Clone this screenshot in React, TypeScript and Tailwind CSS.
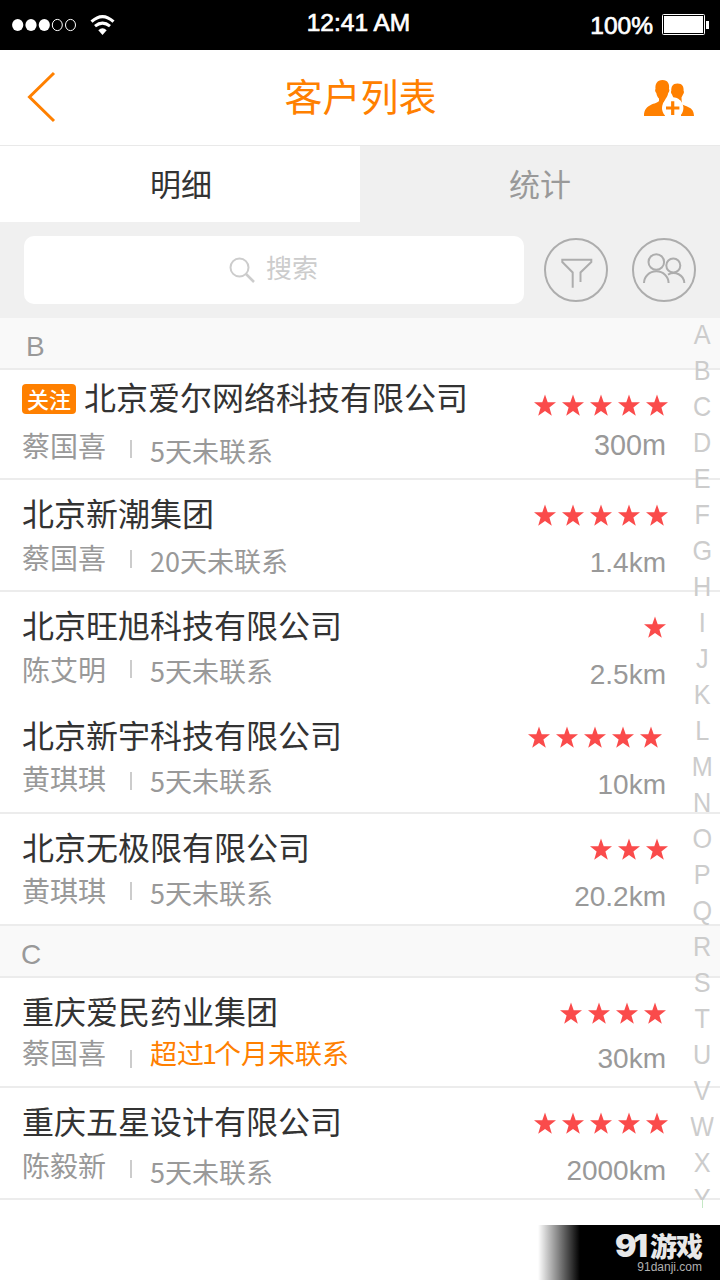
type Customer = {
  name: string;
  person: string;
  note: string;
  noteDigits: string;
  notePrefix?: string;
  distance: string;
  stars: number;
  followed?: boolean;
  urgent?: boolean;
  row: string;
  namePad: string;
  personTop: string;
  barTop: string;
  noteTop: string;
  starsRight: string;
  distanceTop: string;
};

const LINE = 'border-b-2 border-[#ececec]';

const groupB: Customer[] = [
  { name: '北京爱尔网络科技有限公司', person: '蔡国喜', noteDigits: '5', note: '天未联系', distance: '300m', stars: 5, followed: true, row: `h-[110px] ${LINE}`, namePad: 'pt-1.5', personTop: '-mt-px', barTop: 'mt-[10px]', noteTop: 'mt-[5px]', starsRight: 'mr-0', distanceTop: 'mt-[13px] text-[28.8px]' },
  { name: '北京新潮集团', person: '蔡国喜', noteDigits: '20', note: '天未联系', distance: '1.4km', stars: 5, row: `h-[112px] ${LINE}`, namePad: 'pt-3', personTop: 'mt-px', barTop: 'mt-[10px]', noteTop: 'mt-[5px]', starsRight: 'mr-0', distanceTop: 'mt-[21px] text-[28px]' },
  { name: '北京旺旭科技有限公司', person: '陈艾明', noteDigits: '5', note: '天未联系', distance: '2.5km', stars: 1, row: 'h-[110px]', namePad: 'pt-3', personTop: 'mt-px', barTop: 'mt-2', noteTop: 'mt-[3px]', starsRight: 'mr-0.5', distanceTop: 'mt-[21px] text-[28px]' },
  { name: '北京新宇科技有限公司', person: '黄琪琪', noteDigits: '5', note: '天未联系', distance: '10km', stars: 5, row: `h-[112px] ${LINE}`, namePad: 'pt-3', personTop: 'mt-0', barTop: 'mt-[10px]', noteTop: 'mt-[3px]', starsRight: 'mr-1.5', distanceTop: 'mt-[21px] text-[28px]' },
  { name: '北京无极限有限公司', person: '黄琪琪', noteDigits: '5', note: '天未联系', distance: '20.2km', stars: 3, row: `h-[112px] ${LINE}`, namePad: 'pt-3', personTop: 'mt-0', barTop: 'mt-2', noteTop: 'mt-[3px]', starsRight: 'mr-0', distanceTop: 'mt-[21px] text-[28px]' },
];

const groupC: Customer[] = [
  { name: '重庆爱民药业集团', person: '蔡国喜', notePrefix: '超过', noteDigits: '1', note: '个月未联系', distance: '30km', stars: 4, urgent: true, row: `h-[110px] ${LINE}`, namePad: 'pt-3', personTop: '-mt-0.5', barTop: 'mt-3', noteTop: '-mt-px', starsRight: 'mr-0.5', distanceTop: 'mt-[19px] text-[28px]' },
  { name: '重庆五星设计有限公司', person: '陈毅新', noteDigits: '5', note: '天未联系', distance: '2000km', stars: 5, row: `h-[112px] ${LINE}`, namePad: 'pt-3', personTop: 'mt-px', barTop: 'mt-3', noteTop: 'mt-2', starsRight: 'mr-0', distanceTop: 'mt-[21px] text-[28px]' },
];

const CJK = "font-['Noto_Sans_CJK_SC',sans-serif]";
const LATIN = "font-['Liberation_Sans',sans-serif]";

function StatusBar() {
  return (
    <header className="grid h-[50px] grid-cols-3 bg-black font-['Liberation_Sans',sans-serif] text-[24.5px] text-white">
      <div className="flex items-start pl-3 pt-[13px]">
        <svg className="mt-[5px]" width="65" height="14" viewBox="0 0 65 14">
          {[0, 1, 2].map((i) => (
            <ellipse key={i} cx={5.7 + i * 13.3} cy="7" rx="5.6" ry="6" fill="#fff" />
          ))}
          {[3, 4].map((i) => (
            <ellipse key={i} cx={5.7 + i * 13.2} cy="7" rx="5" ry="5.6" fill="none" stroke="#fff" />
          ))}
        </svg>
        <svg className="ml-[13px] mt-px" width="26" height="21" viewBox="0 0 26 21" fill="none" stroke="#fff" strokeWidth="3">
          <path d="M1.500 7.700 Q12.500 -2.500 23.500 7.700" />
          <path d="M5 12.200 Q12.500 6 20 12.200" />
          <path d="M8.300 16.300 Q12.500 12 16.700 16.300 L12.500 21 Z" fill="#fff" stroke="none" />
        </svg>
      </div>
      <div className="pr-[3px] pt-[7px] text-center leading-8 [-webkit-text-stroke:0.7px_white]">12:41 AM</div>
      <div className="flex justify-end pr-[11px]">
        <span className="pt-[10px] leading-8 [-webkit-text-stroke:0.7px_white]">100%</span>
        <svg className="ml-[9px] mt-3.5" width="47" height="21" viewBox="0 0 47 21">
          <rect x="0.500" y="0.500" width="42" height="20" rx="1" fill="none" stroke="#fff" />
          <rect x="2" y="2" width="39" height="17" fill="#fff" />
          <rect x="44" y="7" width="3" height="8" fill="#fff" />
        </svg>
      </div>
    </header>
  );
}

function TitleBar() {
  return (
    <div className="flex h-24 items-start justify-between border-b border-[#e9e9e9]">
      <svg className="ml-[26px] mt-[21px] w-[52px]" width="52" height="52" viewBox="0 0 52 52" fill="none" stroke="#ff8000" strokeWidth="3">
        <path d="M28 2 L3.500 26 L28 50" />
      </svg>
      <h1 className={`mt-[19px] text-[38px] leading-[52px] text-[#ff8000] ${CJK} font-normal`}>客户列表</h1>
      <svg className="mr-[25px] mt-[29px]" width="52" height="38" viewBox="0 0 52 38">
        <path d="M19.500 1 C14 1 12 5 12.500 10 C11.800 10.500 12 13 13.300 14 C13.800 17 15 18.500 16 19.500 L16 22 C14 25.500 1 24 1 37 L22 37 L20 25 L22.500 20 C24 18 24.900 16 25.200 14 C26.500 13 26.700 10.500 26 10 C26.700 5 25 1 19.500 1 Z" fill="#ff8000" />
        <path d="M34.500 4.500 C29.500 4.500 28 8 28.300 12 C27.600 12.500 28 14.500 29 15.500 L30.500 19 L38 22 L38 26 L38 37 L51 37 C51 27 42 28 38.800 25 L38.500 18.500 L40 15.500 C41 14.500 41.300 12.500 40.600 12 C41 8 39.500 4.500 34.500 4.500 Z" fill="#ff8000" />
        <circle cx="29.700" cy="29" r="10.700" fill="#fff" />
        <path d="M29.700 22.300 V36 M23 29 H36.400" stroke="#ff8000" strokeWidth="3.200" />
      </svg>
    </div>
  );
}

function Tabs() {
  return (
    <nav className={`grid h-[76px] grid-cols-2 text-center text-[31px] leading-[74px] ${CJK} font-normal`}>
      <div className="bg-white pl-0.5 text-[#333]">明细</div>
      <div className="bg-[#f0f0f0] text-[#999]">统计</div>
    </nav>
  );
}

function Search() {
  return (
    <div className="flex h-24 items-start bg-[#f0f0f0] pl-6 pt-3.5">
      <div className="flex h-[68px] w-[500px] items-start justify-center rounded-[10px] bg-white pr-px">
        <svg className="mr-[11px] mt-[21px]" width="26" height="26" viewBox="0 0 26 26" fill="none" stroke="#ccc" strokeWidth="2">
          <circle cx="10.500" cy="10.500" r="9" />
          <path d="M17 17 L25 25" strokeWidth="2.500" />
        </svg>
        <span className={`text-[26px] leading-[62px] text-[#ccc] ${CJK} font-normal`}>搜索</span>
      </div>
      <svg className="ml-5 mt-0.5" width="64" height="64" viewBox="0 0 64 64" fill="none" stroke="#adadad" strokeWidth="2">
        <circle cx="32" cy="32" r="31" />
        <path d="M28.700 49.700 V34.500 L18.300 24 V21.800 H47.300 V24 L36.500 34.500 V44" />
      </svg>
      <svg className="ml-6 mt-0.5" width="64" height="64" viewBox="0 0 64 64" fill="none" stroke="#adadad" strokeWidth="2">
        <circle cx="32" cy="32" r="31" />
        <circle cx="24.300" cy="24" r="7.800" />
        <circle cx="41.300" cy="27.500" r="7" />
        <path d="M12 45 A12.300 11.700 0 0 1 36.600 45 M36 36.600 C43 32.500 52 37 52.300 45" />
      </svg>
    </div>
  );
}

function SectionHeader({ letter, className }: { letter: string; className: string }) {
  return (
    <div className={`h-[52px] bg-[#f9f9f9] pt-[13px] text-[28px] leading-8 text-[#999] ${LINE} ${LATIN} ${className}`}>{letter}</div>
  );
}

function Star() {
  return (
    <svg width="22" height="22" viewBox="0 0 22 22">
      <path d="M11 0.400 L13.700 8.200 L22 8.300 L15.400 13.400 L17.800 21.700 L11 17 L4.200 21.700 L6.600 13.400 L0 8.300 L8.300 8.200 Z" fill="#fa4b4b" />
    </svg>
  );
}

function Row({ c }: { c: Customer }) {
  return (
    <div className={`flex justify-between pl-[22px] pr-[52px] ${c.row}`}>
      <div className={`font-normal ${CJK}`}>
        <div className={`flex h-[60px] items-start ${c.namePad}`}>
          {c.followed && (
            <span className="mr-2 mt-2 h-[30px] w-[54px] rounded bg-[#ff8000] text-center text-[22px] font-medium leading-[29px] text-white">关注</span>
          )}
          <span className="text-[32px] leading-10 text-[#333]">{c.name}</span>
        </div>
        <div className="flex items-start text-[#999]">
          <span className={`w-[108px] text-[28px] leading-8 ${c.personTop}`}>{c.person}</span>
          <i className={`h-[18px] w-0.5 bg-[#ccc] ${c.barTop}`} />
          <span className={`ml-[18px] text-[27px] leading-8 ${c.urgent ? 'text-[#ff8000]' : ''} ${c.noteTop}`}>
            {c.notePrefix}
            <span className={c.urgent ? '-ml-0.5 -mr-[3px]' : ''}>{c.noteDigits}</span>
            {c.note}
          </span>
        </div>
      </div>
      <div className="flex flex-col items-end pt-6">
        <div className={`flex gap-1.5 ${c.starsRight}`}>
          {Array.from({ length: c.stars }, (_, i) => (
            <Star key={i} />
          ))}
        </div>
        <span className={`mr-0.5 leading-8 text-[#999] ${LATIN} ${c.distanceTop}`}>{c.distance}</span>
      </div>
    </div>
  );
}

function LetterIndex() {
  return (
    <div className={`absolute right-0 top-0 flex w-9 flex-col items-center text-[28px] leading-9 text-[#ccc] ${LATIN}`}>
      <div className="-mt-px h-[883px] scale-x-90 overflow-hidden text-center">
        {'ABCDEFGHIJKLMNOPQRSTUVWXY'.split('').map((l) => (
          <div key={l}>{l}</div>
        ))}
      </div>
      <i className="h-2 w-px bg-[#c5e8c5]" />
    </div>
  );
}

function Watermark() {
  return (
    <div className="flex h-[55px] w-[182px] flex-col items-end bg-linear-to-r from-transparent to-black to-[42px] pr-[18px]">
      <div className="flex h-9 items-center pt-1.5 leading-8 text-[#e8e8e8]">
        <span className="mr-[5px] font-['Inter','Liberation_Sans',sans-serif] text-[32px] font-black tracking-[-3px]">91</span>
        <span className="font-['Noto_Sans_CJK_SC',sans-serif] text-[27px] font-black tracking-[-1px]">游戏</span>
      </div>
      <span className="font-['Liberation_Sans',sans-serif] text-xs leading-3 text-[#b0b0b0]">91danji.com</span>
    </div>
  );
}

export default function App() {
  return (
    <div className="flex h-[1280px] w-[720px] flex-col overflow-hidden bg-white">
      <StatusBar />
      <TitleBar />
      <Tabs />
      <Search />
      <main className="relative h-[907px]">
        <SectionHeader letter="B" className="pl-[26px]" />
        {groupB.map((c) => (
          <Row key={c.name} c={c} />
        ))}
        <SectionHeader letter="C" className="pl-[21px]" />
        {groupC.map((c) => (
          <Row key={c.name} c={c} />
        ))}
        <LetterIndex />
      </main>
      <footer className="flex justify-end">
        <Watermark />
      </footer>
    </div>
  );
}
